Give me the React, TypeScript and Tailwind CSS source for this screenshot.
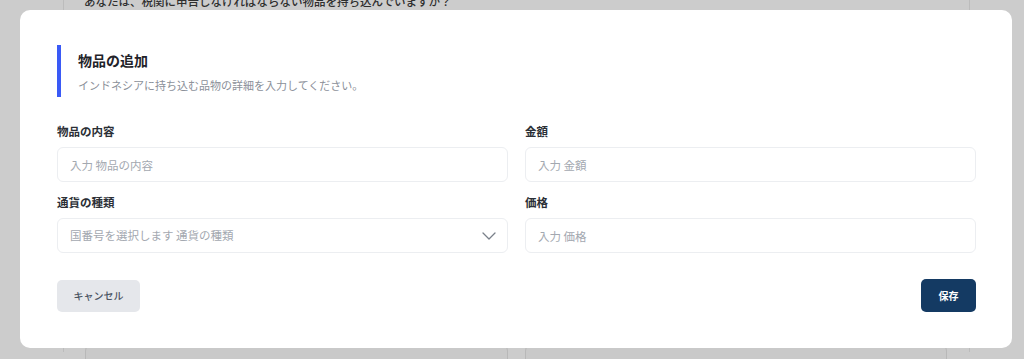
import { useState } from 'react'

interface FieldProps {
  label: string
  placeholder: string
  select?: boolean
}

function Field({ label, placeholder, select }: FieldProps) {
  const [value, setValue] = useState('')

  return (
    <label className="flex flex-col">
      <span className="mb-2 text-[11.5px] font-semibold leading-[16px] text-[#2b2f36]">{label}</span>
      {select ? (
        <div className="flex h-[35px] items-center justify-between rounded-[6px] border border-[#eceef1] bg-white pl-3 pr-[11px]">
          <span className="text-[11.5px] text-[#a3a8b0]">{placeholder}</span>
          <svg width="14" height="8" viewBox="0 0 14 8" fill="none" className="text-[#7a808a]">
            <path d="M1 1l6 6 6-6" stroke="currentColor" strokeWidth="1.3" strokeLinecap="round" strokeLinejoin="round" />
          </svg>
        </div>
      ) : (
        <input
          type="text"
          value={value}
          onChange={(event) => setValue(event.target.value)}
          placeholder={placeholder}
          className="h-[35px] w-full rounded-[6px] border border-[#eceef1] bg-white px-3 text-[11.5px] text-[#2b2f36] outline-none placeholder:text-[#a3a8b0]"
        />
      )}
    </label>
  )
}

export default function App() {
  return (
    <div className="relative h-[359px] w-[1024px] overflow-hidden bg-white font-['Noto_Sans_CJK_JP',sans-serif]">
      {/* page behind the dialog */}
      <div className="ml-[63px] mr-[54px] h-full border-x border-[#ececec]">
        <p className="-mt-[7px] pl-[20px] text-[11.5px] font-medium leading-[16px] text-[#3a3a3a]">
          あなたは、税関に申告しなければならない物品を持ち込んでいますか？
        </p>
        <div className="mt-[334px] grid grid-cols-2 gap-[17px] pl-[21px] pr-[22px]">
          <div className="h-[60px] rounded-lg border border-[#e6e6e6] bg-[#fcfcfc]" />
          <div className="h-[60px] rounded-lg border border-[#e6e6e6] bg-[#fcfcfc]" />
        </div>
      </div>

      <div className="absolute inset-0 bg-black/20" />

      {/* dialog */}
      <div className="absolute left-[20px] right-[12px] top-[10px] rounded-[10px] bg-white pb-[36px] pl-[37px] pr-[36px] pt-[35px]">
        <div className="border-l-4 border-[#3a5af6] pb-[4px] pl-[17px] pt-[5px]">
          <h2 className="text-[14px] font-bold leading-[20px] text-[#1f2329]">物品の追加</h2>
          <p className="mt-[7px] text-[11px] leading-[16px] text-[#8b9099]">インドネシアに持ち込む品物の詳細を入力してください。</p>
        </div>

        <div className="mt-[26px] grid grid-cols-2 gap-x-[17px] gap-y-[12px]">
          <Field label="物品の内容" placeholder="入力 物品の内容" />
          <Field label="金額" placeholder="入力 金額" />
          <Field label="通貨の種類" placeholder="国番号を選択します 通貨の種類" select />
          <Field label="価格" placeholder="入力 価格" />
        </div>

        <div className="mt-[26px] flex items-center justify-between">
          <button type="button" className="h-[32px] w-[83px] rounded-[5px] bg-[#e5e7eb] text-[10px] font-medium text-[#4b5563]">
            キャンセル
          </button>
          <button type="button" className="h-[33px] w-[55px] rounded-[5px] bg-[#143a63] text-[10px] font-bold text-white">
            保存
          </button>
        </div>
      </div>
    </div>
  )
}
